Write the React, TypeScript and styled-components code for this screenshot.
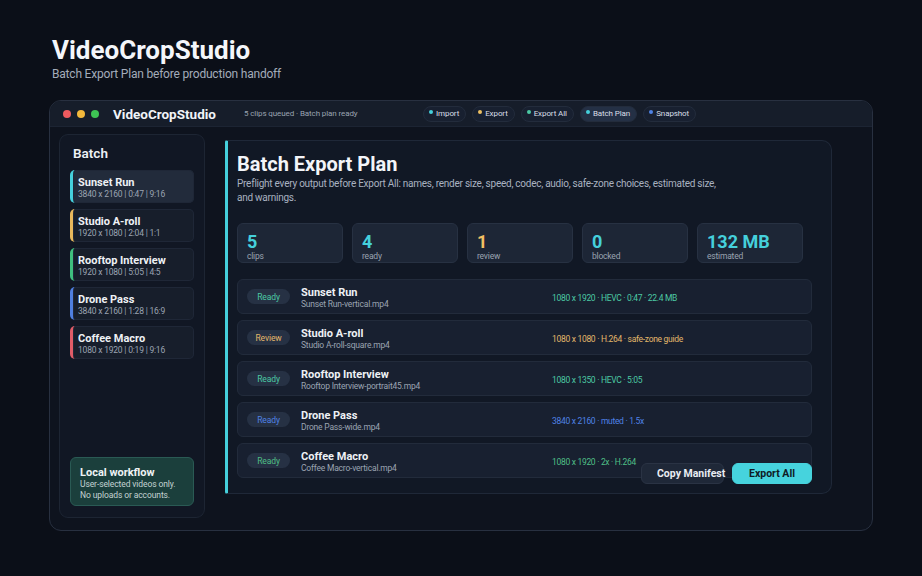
import React, { FC } from "react";
import styled, { createGlobalStyle } from "styled-components";

const GlobalStyle = createGlobalStyle`
    html, body {
        margin: 0;
        padding: 0;
        background: #0b0f18;
        font-family: Roboto, "Liberation Sans", sans-serif;
        color: #e8ecf2;
    }
    * {
        box-sizing: border-box;
    }
`;

const Page = styled.div`
    width: 922px;
    height: 576px;
    padding: 34px 49px 0 49px;
    background: #0b0f18;
`;

const PageHeader = styled.header`
    padding-left: 3px;
    height: 66px;
`;

const PageTitle = styled.h1`
    margin: 0;
    font-size: 26px;
    line-height: 32px;
    font-weight: 700;
    color: #f4f6fa;
`;

const PageSubtitle = styled.p`
    margin: 0;
    font-size: 12px;
    letter-spacing: -0.2px;
    line-height: 16px;
    color: #a3acba;
`;

const Window = styled.div`
    width: 824px;
    height: 431px;
    border: 1px solid #283040;
    border-radius: 12px;
    background: #0e131e;
    overflow: hidden;
    display: flex;
    flex-direction: column;
`;

const TitleBar = styled.div`
    height: 26px;
    flex: none;
    display: flex;
    align-items: center;
    padding-left: 13px;
    background: #161d2a;
    border-bottom: 1px solid #1c2433;
`;

const Light = styled.span<{ color: string }>`
    width: 8px;
    height: 8px;
    border-radius: 50%;
    background: ${(p) => p.color};
    margin-right: 6px;
`;

const AppName = styled.div`
    margin-left: 8px;
    width: 131px;
    font-size: 13.5px;
    font-weight: 700;
    color: #f1f4f8;
`;

const Status = styled.div`
    width: 179px;
    font-size: 8px;
    letter-spacing: -0.1px;
    color: #9aa3b1;
`;

const Toolbar = styled.div`
    display: flex;
    gap: 6px;
`;

const ToolButton = styled.div<{ active?: boolean }>`
    height: 16px;
    display: flex;
    align-items: center;
    gap: 3px;
    padding: 0 6px 0 5px;
    border-radius: 8px;
    border: 1px solid #232c3c;
    background: ${(p) => (p.active ? "#243045" : "#182030")};
    font-size: 8px;
    letter-spacing: -0.1px;
    color: #d9dee7;
`;

const Dot = styled.span<{ color: string }>`
    width: 4px;
    height: 4px;
    border-radius: 50%;
    background: ${(p) => p.color};
    transform: translateY(-2px);
`;

const WindowBody = styled.div`
    flex: 1;
    display: flex;
    align-items: flex-start;
    padding: 7px 10px 10px 9px;
    gap: 20px;
`;

const Sidebar = styled.aside`
    width: 146px;
    height: 384px;
    flex: none;
    display: flex;
    flex-direction: column;
    padding: 10px 10px 11px 10px;
    border: 1px solid #1d2533;
    border-radius: 9px;
    background: #111724;
`;

const SidebarTitle = styled.h2`
    margin: 0 0 8px 3px;
    font-size: 13.5px;
    line-height: 17px;
    font-weight: 600;
    color: #eef1f5;
`;

const ClipList = styled.div`
    display: flex;
    flex-direction: column;
    gap: 6px;
`;

const ClipItem = styled.div<{ accent: string; selected?: boolean }>`
    height: 33px;
    padding: 6px 6px 0 5px;
    border-left: 3px solid ${(p) => p.accent};
    border-radius: 5px;
    background: ${(p) => (p.selected ? "#222b3b" : "#171e2b")};
    box-shadow: inset 0 0 0 1px #1f2737;
`;

const ClipName = styled.div`
    font-size: 11px;
    line-height: 13px;
    font-weight: 700;
    color: #eef1f5;
`;

const ClipMeta = styled.div`
    font-size: 8.5px;
    letter-spacing: -0.2px;
    line-height: 11px;
    color: #9ba4b2;
`;

const WorkflowNote = styled.div`
    margin-top: auto;
    height: 49px;
    padding: 8px 9px;
    border: 1px solid #2a5a54;
    border-radius: 6px;
    background: #1b3f3c;
`;

const NoteTitle = styled.div`
    font-size: 11px;
    line-height: 13px;
    font-weight: 700;
    color: #eef3f4;
`;

const NoteText = styled.div`
    font-size: 8.5px;
    letter-spacing: -0.1px;
    line-height: 11px;
    color: #c3d3d3;
`;

const Main = styled.main`
    position: relative;
    margin-top: 6px;
    width: 607px;
    height: 354px;
    flex: none;
    padding: 11px 19px 15px 9px;
    border: 1px solid #1f2838;
    border-left: 3px solid #45d0dc;
    border-radius: 2px 10px 10px 2px;
    background: #111825;
`;

const MainTitle = styled.h2`
    margin: 0;
    font-size: 20px;
    line-height: 24px;
    font-weight: 700;
    color: #f3f5f9;
`;

const Description = styled.p`
    margin: 1px 0 0 0;
    width: 486px;
    font-size: 10px;
    letter-spacing: -0.25px;
    line-height: 13.5px;
    color: #a9b2c0;
`;

const Stats = styled.div`
    margin-top: 19px;
    display: grid;
    grid-template-columns: repeat(5, 106px);
    gap: 9px;
`;

const StatCard = styled.div`
    height: 40px;
    padding: 9px 9px 0 9px;
    border: 1px solid #273142;
    border-radius: 6px;
    background: #1d2636;
`;

const StatValue = styled.div<{ color: string }>`
    font-size: 18px;
    line-height: 18px;
    font-weight: 700;
    color: ${(p) => p.color};
`;

const StatLabel = styled.div`
    font-size: 8.5px;
    letter-spacing: -0.2px;
    line-height: 11px;
    color: #9aa3b0;
`;

const PlanList = styled.div`
    margin-top: 16px;
    display: flex;
    flex-direction: column;
    gap: 6px;
`;

const PlanRow = styled.div`
    height: 35px;
    display: grid;
    grid-template-columns: 43px 240px 1fr;
    align-items: center;
    column-gap: 11px;
    padding: 3px 9px 0 9px;
    border: 1px solid #222b3b;
    border-radius: 6px;
    background: #182030;
`;

const Badge = styled.span<{ color: string }>`
    height: 15px;
    margin-top: -3px;
    display: flex;
    align-items: center;
    justify-content: center;
    border-radius: 8px;
    background: #263144;
    font-size: 8.5px;
    letter-spacing: -0.1px;
    color: ${(p) => p.color};
`;

const RowName = styled.div`
    font-size: 11px;
    line-height: 13px;
    font-weight: 700;
    color: #eef1f5;
`;

const RowFile = styled.div`
    font-size: 8.5px;
    letter-spacing: -0.2px;
    line-height: 11px;
    color: #9ba4b2;
`;

const RowSpec = styled.div<{ color: string }>`
    font-size: 8.5px;
    letter-spacing: -0.3px;
    color: ${(p) => p.color};
`;

const Actions = styled.div`
    position: absolute;
    right: 19px;
    bottom: 9px;
    display: flex;
    gap: 8px;
`;

const ActionButton = styled.button<{ primary?: boolean }>`
    height: 21px;
    width: ${(p) => (p.primary ? "80px" : "83px")};
    padding: 0 0 0 ${(p) => (p.primary ? "0" : "15px")};
    text-align: ${(p) => (p.primary ? "center" : "left")};
    white-space: nowrap;
    overflow: visible;
    border-radius: 6px;
    border: 1px solid ${(p) => (p.primary ? "#46d3dd" : "#2a3344")};
    background: ${(p) => (p.primary ? "#46d3dd" : "#1f2838")};
    color: ${(p) => (p.primary ? "#0f1b25" : "#e9edf3")};
    font-family: Roboto, "Liberation Sans", sans-serif;
    font-size: 10.5px;
    font-weight: 700;
`;

const clips = [
    { name: "Sunset Run", meta: "3840 x 2160 | 0:47 | 9:16", accent: "#45d0dc" },
    { name: "Studio A-roll", meta: "1920 x 1080 | 2:04 | 1:1", accent: "#e8b85c" },
    { name: "Rooftop Interview", meta: "1920 x 1080 | 5:05 | 4:5", accent: "#3fbf7f" },
    { name: "Drone Pass", meta: "3840 x 2160 | 1:28 | 16:9", accent: "#4f7fe0" },
    { name: "Coffee Macro", meta: "1080 x 1920 | 0:19 | 9:16", accent: "#e05c68" },
];

const tools = [
    { label: "Import", color: "#45d0dc" },
    { label: "Export", color: "#eec063" },
    { label: "Export All", color: "#4cc9a4" },
    { label: "Batch Plan", color: "#45d0dc", active: true },
    { label: "Snapshot", color: "#4f82e6" },
];

const stats = [
    { value: "5", label: "clips", color: "#45d0dc" },
    { value: "4", label: "ready", color: "#45d0dc" },
    { value: "1", label: "review", color: "#f2c063" },
    { value: "0", label: "blocked", color: "#45d0dc" },
    { value: "132 MB", label: "estimated", color: "#45d0dc" },
];

const plan = [
    { status: "Ready", color: "#4cc9a4", name: "Sunset Run", file: "Sunset Run-vertical.mp4", spec: "1080 x 1920 · HEVC · 0:47 · 22.4 MB" },
    { status: "Review", color: "#e3b86b", name: "Studio A-roll", file: "Studio A-roll-square.mp4", spec: "1080 x 1080 · H.264 · safe-zone guide" },
    { status: "Ready", color: "#4cc9a4", name: "Rooftop Interview", file: "Rooftop Interview-portrait45.mp4", spec: "1080 x 1350 · HEVC · 5:05" },
    { status: "Ready", color: "#4f82e6", name: "Drone Pass", file: "Drone Pass-wide.mp4", spec: "3840 x 2160 · muted · 1.5x" },
    { status: "Ready", color: "#4fbf86", name: "Coffee Macro", file: "Coffee Macro-vertical.mp4", spec: "1080 x 1920 · 2x · H.264" },
];

const App: FC = () => {
    return (
        <Page>
            <GlobalStyle />
            <PageHeader>
                <PageTitle>VideoCropStudio</PageTitle>
                <PageSubtitle>Batch Export Plan before production handoff</PageSubtitle>
            </PageHeader>
            <Window>
                <TitleBar>
                    <Light color="#ee5a5f" />
                    <Light color="#f2b83b" />
                    <Light color="#3ec454" />
                    <AppName>VideoCropStudio</AppName>
                    <Status>5 clips queued · Batch plan ready</Status>
                    <Toolbar>
                        {tools.map((t) => (
                            <ToolButton key={t.label} active={t.active}>
                                <Dot color={t.color} />
                                {t.label}
                            </ToolButton>
                        ))}
                    </Toolbar>
                </TitleBar>
                <WindowBody>
                    <Sidebar>
                        <SidebarTitle>Batch</SidebarTitle>
                        <ClipList>
                            {clips.map((c, i) => (
                                <ClipItem key={c.name} accent={c.accent} selected={i === 0}>
                                    <ClipName>{c.name}</ClipName>
                                    <ClipMeta>{c.meta}</ClipMeta>
                                </ClipItem>
                            ))}
                        </ClipList>
                        <WorkflowNote>
                            <NoteTitle>Local workflow</NoteTitle>
                            <NoteText>
                                User-selected videos only.
                                <br />
                                No uploads or accounts.
                            </NoteText>
                        </WorkflowNote>
                    </Sidebar>
                    <Main>
                        <MainTitle>Batch Export Plan</MainTitle>
                        <Description>
                            Preflight every output before Export All: names, render size, speed, codec, audio, safe-zone choices, estimated size, and warnings.
                        </Description>
                        <Stats>
                            {stats.map((s) => (
                                <StatCard key={s.label}>
                                    <StatValue color={s.color}>{s.value}</StatValue>
                                    <StatLabel>{s.label}</StatLabel>
                                </StatCard>
                            ))}
                        </Stats>
                        <PlanList>
                            {plan.map((r) => (
                                <PlanRow key={r.name}>
                                    <Badge color={r.color}>{r.status}</Badge>
                                    <div>
                                        <RowName>{r.name}</RowName>
                                        <RowFile>{r.file}</RowFile>
                                    </div>
                                    <RowSpec color={r.color}>{r.spec}</RowSpec>
                                </PlanRow>
                            ))}
                        </PlanList>
                        <Actions>
                            <ActionButton>Copy Manifest</ActionButton>
                            <ActionButton primary>Export All</ActionButton>
                        </Actions>
                    </Main>
                </WindowBody>
            </Window>
        </Page>
    );
};

export default App;
